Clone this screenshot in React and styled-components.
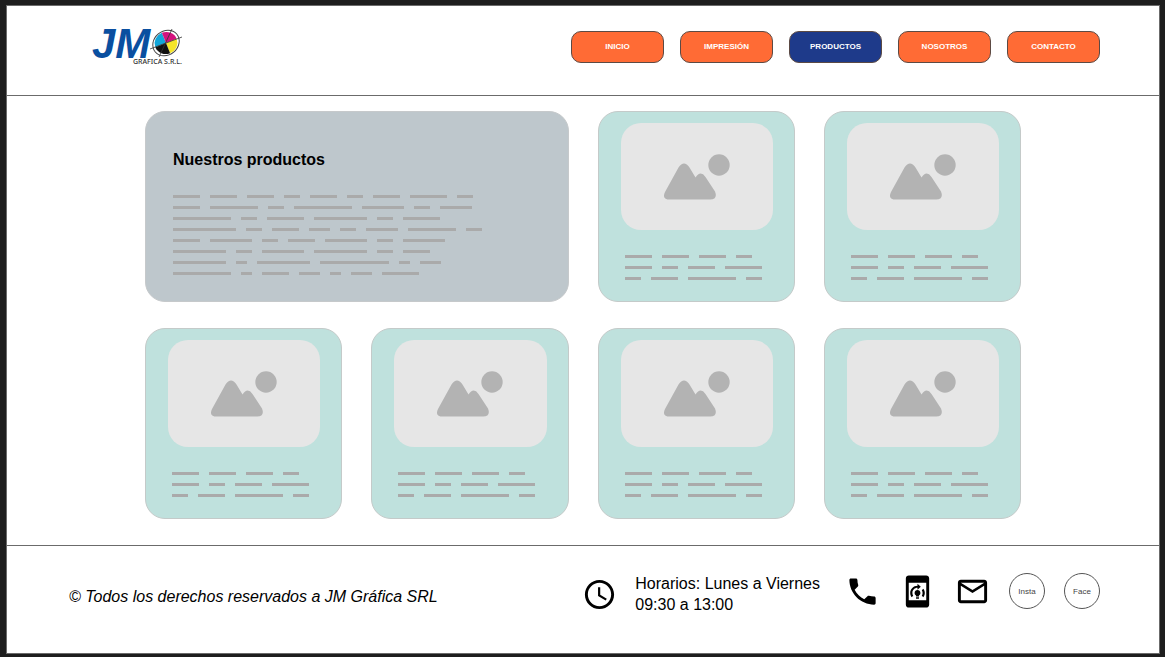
import React from "react";
import styled, { createGlobalStyle } from "styled-components";
import {
  MdSchedule,
  MdPhone,
  MdOnDeviceTraining,
  MdOutlineMail,
} from "react-icons/md";

const GlobalStyle = createGlobalStyle`
  *, *::before, *::after { box-sizing: border-box; }
  html { background: #1e1e1e; }
  body {
    margin: 0;
    padding: 5px 5px 3px 6px;
    font-family: "Liberation Sans", Arial, sans-serif;
    font-size: 16px;
    color: #000;
  }
`;

const Frame = styled.div`
  background: #fff;
  border: 1px solid #6b6b6b;
`;

const Header = styled.header`
  display: flex;
  justify-content: space-between;
  align-items: flex-start;
  padding: 20px 59px 0 85px;
  height: 90px;
  border-bottom: 1px solid #6b6b6b;
`;

const LogoLink = styled.a`
  display: block;
  line-height: 0;
`;

const Nav = styled.nav`
  display: flex;
  gap: 16px;
  padding-top: 5px;
`;

const NavLink = styled.a`
  display: flex;
  align-items: center;
  justify-content: center;
  width: 93px;
  height: 32px;
  padding-bottom: 1px;
  border: 1px solid #5c4a44;
  border-radius: 10px;
  background: ${(p) => (p.$active ? "#1e3a8a" : "#ff6b35")};
  color: #fff;
  font-size: 8px;
  font-weight: 700;
  text-decoration: none;
`;

const Grid = styled.main`
  display: grid;
  grid-template-columns: repeat(4, minmax(0, 1fr));
  gap: 26px 29px;
  padding: 15px 138px 26px;
`;

const Card = styled.article`
  min-height: 191px;
  padding: 11px 21px 11px 22px;
  border: 1px solid #c4cac9;
  border-radius: 20px;
  background: #bfe1dd;
`;

const IntroCard = styled.section`
  grid-column: span 2;
  padding: 38px 27px 20px;
  border: 1px solid #c6c9cb;
  border-radius: 20px;
  background: #bec7cc;
`;

const Title = styled.h1`
  margin: 0 0 25px;
  font-size: 16px;
  line-height: 20px;
`;

const Thumb = styled.div`
  display: flex;
  align-items: center;
  justify-content: center;
  height: 107px;
  border-radius: 20px;
  background: #e6e6e6;
`;

const Lines = styled.div`
  display: flex;
  flex-direction: column;
  gap: 8px;
`;

const CardText = styled.div`
  padding: 25px 0 0 4px;
`;

const Line = styled.div`
  display: flex;
  gap: 10px;
`;

const Word = styled.span`
  flex: none;
  height: 3px;
  background: #aaa;
`;

const Footer = styled.footer`
  display: flex;
  justify-content: space-between;
  align-items: flex-start;
  min-height: 108px;
  padding: 27px 59px 0 62px;
  border-top: 1px solid #6b6b6b;
`;

const Rights = styled.p`
  margin: 14px 0 0;
  line-height: 20px;
  font-style: italic;
`;

const Contact = styled.div`
  display: flex;
  gap: 24px;
`;

const Hours = styled.div`
  display: flex;
  align-items: center;
  gap: 18px;
`;

const HoursText = styled.p`
  margin: 0;
  line-height: 21px;
`;

const Links = styled.div`
  display: flex;
  align-items: flex-start;
  gap: 19px;
`;

const IconLink = styled.a`
  display: flex;
  align-items: center;
  justify-content: center;
  width: 36px;
  height: 36px;
  color: #000;
`;

const RoundLink = styled(IconLink)`
  border: 1px solid #555;
  border-radius: 50%;
  color: #444;
  font-size: 8px;
  text-decoration: none;
`;

const introLines = [
  [5, 5, 5, 3, 5, 3, 5, 7, 3],
  [5, 9, 3, 11, 8, 3, 6],
  [11, 3, 7, 10, 3, 7],
  [12, 3, 5, 4, 3, 6, 9, 3],
  [5, 8, 3, 5, 8, 3, 8],
  [10, 3, 8, 10, 3, 5],
  [10, 2, 10, 13, 2, 4],
  [11, 2, 5, 4, 2, 4, 7],
];

const cardLines = [
  [5, 5, 5, 3],
  [5, 3, 5, 7],
  [3, 5, 9, 3],
];

const wordWidth = (letters) => Math.floor(letters * 5.25 + 0.75);

function Placeholder({ lines }) {
  return (
    <Lines aria-hidden="true">
      {lines.map((words, i) => (
        <Line key={i}>
          {words.map((letters, j) => (
            <Word key={j} style={{ width: wordWidth(letters) }} />
          ))}
        </Line>
      ))}
    </Lines>
  );
}

function Logo() {
  return (
    <svg width="92" height="42" viewBox="0 0 92 42" role="img" aria-label="JM Gráfica S.R.L.">
      <text x="0" y="32" fontFamily="Liberation Sans, Arial, sans-serif" fontSize="42" fontWeight="700" fontStyle="italic" fill="#0a4fa0">
        JM
      </text>
      <ellipse cx="74" cy="17" rx="14" ry="12" transform="rotate(-40 74 17)" fill="#fff" stroke="#444" strokeWidth="1" />
      <g transform="rotate(-22 74 17)">
        <path d="M74 17V6A11.500 11 0 0 0 62.500 17Z" fill="#12a5d8" />
        <path d="M74 17H85.500A11.500 11 0 0 0 74 6Z" fill="#d4127d" />
        <path d="M74 17V28A11.500 11 0 0 0 85.500 17Z" fill="#f5e52a" />
        <path d="M74 17H62.500A11.500 11 0 0 0 74 28Z" fill="#111" />
      </g>
      <path d="M58 23L90 11M80 3L67 31" stroke="#333" strokeWidth="0.8" />
      <text x="41" y="38" fontFamily="Noto Sans, sans-serif" fontSize="7" fontWeight="500" fill="#333">
        GRAFICA S.R.L.
      </text>
    </svg>
  );
}

function ImageIcon() {
  return (
    <svg width="66" height="46" viewBox="0 0 66 46" aria-hidden="true">
      <circle cx="55" cy="11" r="10.700" fill="#b3b3b3" />
      <path
        d="M1 38L14.500 13.500Q20 5.500 25.500 13.500L31.500 23.500Q36.500 16 41.500 23L51 37.500Q54 45.500 46 45.500H6Q-2.500 45.500 1 38Z"
        fill="#b3b3b3"
      />
    </svg>
  );
}

function ProductCard() {
  return (
    <Card>
      <Thumb>
        <ImageIcon />
      </Thumb>
      <CardText>
        <Placeholder lines={cardLines} />
      </CardText>
    </Card>
  );
}

const navItems = ["INICIO", "IMPRESIÓN", "PRODUCTOS", "NOSOTROS", "CONTACTO"];

export default function App() {
  return (
    <>
      <GlobalStyle />
      <Frame>
        <Header>
          <LogoLink href="#inicio">
            <Logo />
          </LogoLink>
          <Nav>
            {navItems.map((item) => (
              <NavLink key={item} href={`#${item.toLowerCase()}`} $active={item === "PRODUCTOS"}>
                {item}
              </NavLink>
            ))}
          </Nav>
        </Header>
        <Grid>
          <IntroCard>
            <Title>Nuestros productos</Title>
            <Placeholder lines={introLines} />
          </IntroCard>
          {[1, 2, 3, 4, 5, 6].map((id) => (
            <ProductCard key={id} />
          ))}
        </Grid>
        <Footer>
          <Rights>© Todos los derechos reservados a JM Gráfica SRL</Rights>
          <Contact>
            <Hours>
              <MdSchedule size={35} />
              <HoursText>
                Horarios: Lunes a Viernes
                <br />
                09:30 a 13:00
              </HoursText>
            </Hours>
            <Links>
              <IconLink href="#telefono" aria-label="Teléfono">
                <MdPhone size={35} />
              </IconLink>
              <IconLink href="#movil" aria-label="Móvil">
                <MdOnDeviceTraining size={35} />
              </IconLink>
              <IconLink href="#correo" aria-label="Correo">
                <MdOutlineMail size={35} />
              </IconLink>
              <RoundLink href="#instagram">Insta</RoundLink>
              <RoundLink href="#facebook">Face</RoundLink>
            </Links>
          </Contact>
        </Footer>
      </Frame>
    </>
  );
}
